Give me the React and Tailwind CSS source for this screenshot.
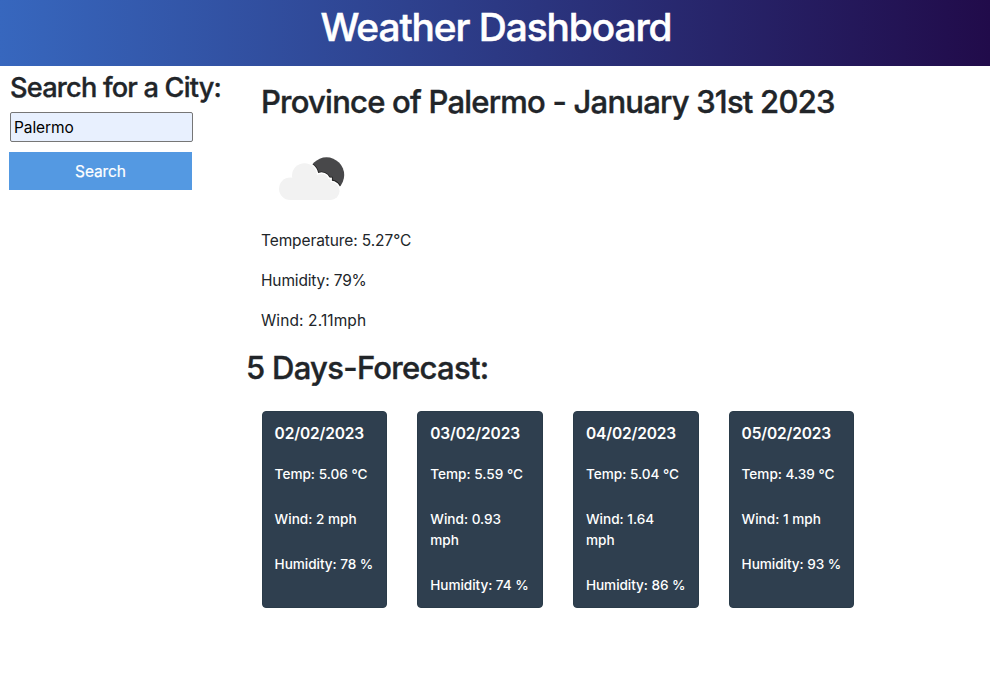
const forecast = [
  { date: '02/02/2023', temp: '5.06', wind: '2', humidity: '78' },
  { date: '03/02/2023', temp: '5.59', wind: '0.93', humidity: '74' },
  { date: '04/02/2023', temp: '5.04', wind: '1.64', humidity: '86' },
  { date: '05/02/2023', temp: '4.39', wind: '1', humidity: '93' },
];

function CloudShape() {
  return (
    <>
      <circle cx="29.3" cy="59.7" r="11.300" />
      <circle cx="43.5" cy="46.700" r="12.500" />
      <circle cx="60.5" cy="52" r="7.300" />
      <circle cx="69.500" cy="61.900" r="9.100" />
      <rect x="29.300" y="50" width="40.200" height="21" />
    </>
  );
}

function CloudIcon() {
  return (
    <svg viewBox="0 0 100 100" className="block size-[100px]" aria-hidden="true">
      <clipPath id="sun">
        <circle cx="65.5" cy="46" r="17.7" />
      </clipPath>
      <circle cx="65.5" cy="46" r="17.7" fill="#48484a" />
      <g clipPath="url(#sun)">
        <g fill="#222" stroke="#222" strokeWidth="4.500">
          <CloudShape />
        </g>
      </g>
      <g fill="#fff" stroke="#fff" strokeWidth="2.800">
        <CloudShape />
      </g>
      <g fill="#f2f2f2">
        <CloudShape />
      </g>
    </svg>
  );
}

export default function App() {
  return (
    <div className="min-h-screen bg-white font-['Inter',sans-serif] text-[15.5px] text-[#212529]">
      <header className="flex h-[66px] justify-center bg-linear-to-r/srgb from-[#3767be] to-[#210b4a] pt-[3px] pl-[2px]">
        <h1 className="text-[38.8px] leading-[48px] font-medium tracking-[-1.07px] whitespace-nowrap text-white [-webkit-text-stroke:0.5px]">Weather Dashboard</h1>
      </header>
      <div className="flex">
        <aside className="w-[246px] shrink-0 pt-[5px] pl-[10px]">
          <h3 className="text-[27.2px] leading-[34px] font-medium tracking-[-0.8px] whitespace-nowrap [-webkit-text-stroke:0.35px]">Search for a City:</h3>
          <input
            type="text"
            defaultValue="Palermo"
            className="mt-[7px] block h-[30px] w-[183px] rounded-[2px] border border-[#767676] bg-[#e8f0fe] px-[3px] text-[15.5px] tracking-[-0.1px] text-black outline-none"
          />
          <button className="mt-[10px] -ml-px block h-[38px] w-[183px] bg-[#5499e2] pt-[2px] text-[15.5px] tracking-[-0.1px] text-white [-webkit-text-stroke:0.2px]">Search</button>
        </aside>
        <main className="grow">
          <section className="pt-[17px] pl-[15px]">
            <h2 className="text-[31px] leading-[38px] font-medium tracking-[-0.78px] whitespace-nowrap [-webkit-text-stroke:0.4px]">Province of Palermo - January 31st 2023</h2>
            <div className="mt-[8px]">
              <CloudIcon />
            </div>
            <p className="leading-6 tracking-[-0.1px]">Temperature: 5.27°C</p>
            <p className="mt-4 leading-6 tracking-[-0.15px]">Humidity: 79%</p>
            <p className="mt-4 leading-6 tracking-[0.1px]">Wind: 2.11mph</p>
          </section>
          <h2 className="mt-4 text-[31px] leading-[38px] font-medium tracking-[-0.7px] [-webkit-text-stroke:0.4px]">5 Days-Forecast:</h2>
          <div className="mt-6 ml-[15.6px] flex h-[197px] w-[592.6px] gap-[30px]">
            {forecast.map((day) => (
              <div key={day.date} className="min-w-0 flex-1 rounded-[4px] border border-[#2a3b49] bg-[#2f3f4f] px-3 pt-3 text-white">
                <h5 className="text-[15.5px] leading-[19px] font-semibold tracking-[-0.15px]">{day.date}</h5>
                <p className="mt-[21px] text-[13.6px] leading-[21px] font-medium">Temp: {day.temp} °C</p>
                <p className="mt-6 text-[13.6px] leading-[21px] font-medium">Wind: {day.wind} mph</p>
                <p className="mt-6 text-[13.6px] leading-[21px] font-medium tracking-[-0.05px] whitespace-nowrap">Humidity: {day.humidity} %</p>
              </div>
            ))}
          </div>
        </main>
      </div>
    </div>
  );
}
